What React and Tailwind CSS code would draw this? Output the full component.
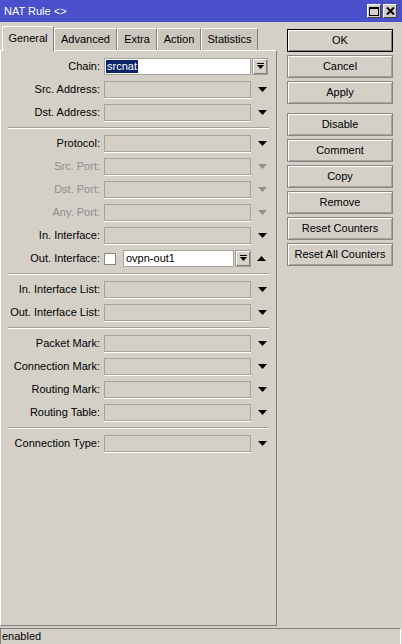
import React from 'react';

const font = "font-['Liberation_Sans',Arial,sans-serif]";

const DropIcon = ({ up = false, disabled = false }) => (
  <svg width="9" height="5" viewBox="0 0 9 5" className="shrink-0">
    {up ? (
      <polygon points="0,5 9,5 4.5,0" fill={disabled ? '#8e8e8e' : '#000'} />
    ) : (
      <polygon points="0,0 9,0 4.5,5" fill={disabled ? '#8e8e8e' : '#000'} />
    )}
  </svg>
);

const ComboButton = () => (
  <div className="flex h-[17px] w-[16px] shrink-0 items-center justify-center border border-[#a09d97] bg-[#d4d0c8] shadow-[inset_1px_1px_0_white,inset_-1px_-1px_0_#808080]">
    <svg width="7" height="7" viewBox="0 0 7 7">
      <rect x="0" y="0" width="7" height="1" fill="#000" />
      <polygon points="0,2 7,2 3.5,6" fill="#000" />
    </svg>
  </div>
);

const Field = ({ label, disabled = false }) => (
  <div className="flex h-[17px] items-center">
    <div className={`w-[100px] pr-[1px] text-right ${disabled ? 'text-[#8e8e8e]' : 'text-black'}`}>{label}</div>
    <div className="ml-[3px] h-[17px] w-[147px] border border-[#a6a39d] bg-[#d4d0c8] shadow-[0_1px_0_white]" />
    <div className="ml-[7px]">
      <DropIcon disabled={disabled} />
    </div>
  </div>
);

const Sep = () => <div className="ml-[7px] h-[2px] w-[261px] border-t border-b border-t-[#a4a19b] border-b-white" />;

const Btn = ({ children, primary = false, className = '' }) => (
  <button
    className={`h-[23px] w-[106px] bg-[#d4d0c8] text-[11px] text-black ${
      primary
        ? 'border border-black shadow-[inset_1px_1px_0_white,inset_-1px_-1px_0_#808080]'
        : 'border border-[#8a8782] shadow-[inset_1px_1px_0_white,inset_-1px_-1px_0_#a5a29c]'
    } ${className}`}
  >
    {children}
  </button>
);

const tabs = ['Advanced', 'Extra', 'Action', 'Statistics'];
const tabWidths = ['w-[63px]', 'w-[40px]', 'w-[44px]', 'w-[57px]'];

export default function App() {
  return (
    <div className={`${font} flex h-[644px] w-[402px] flex-col overflow-hidden bg-[#d4d0c8] text-[11px] text-black`}>
      {/* title bar */}
      <div className="flex h-[22px] shrink-0 items-center bg-[#4a4fcb] pl-[4px] pr-[5px] text-white">
        <span className="flex-1 text-[11px]">NAT Rule &lt;&gt;</span>
        <div className="flex gap-[2px]">
          <div className="flex h-[14px] w-[14px] items-center justify-center border border-[#404040] border-l-white border-t-white bg-[#d4d0c8]">
            <div className="h-[9px] w-[10px] border border-t-2 border-black" />
          </div>
          <div className="flex h-[14px] w-[14px] items-center justify-center border border-[#404040] border-l-white border-t-white bg-[#d4d0c8]">
            <svg width="9" height="8" viewBox="0 0 9 8">
              <path d="M1 0.5 L8 7.5 M8 0.5 L1 7.5" stroke="#000" strokeWidth="2" />
            </svg>
          </div>
        </div>
      </div>

      <div className="flex flex-1">
        {/* left side */}
        <div className="flex w-[277px] flex-col pt-[3px]">
          <div className="flex h-[25px] items-end pl-[2px]">
            <div className="relative top-[1px] z-10 flex h-[25px] w-[52px] items-center justify-center border-l border-t border-r border-l-white border-t-white border-r-[#808080] bg-[#d4d0c8] pb-[2px] text-[11px]">
              General
            </div>
            {tabs.map((t, i) => (
              <div
                key={t}
                className={`flex h-[22px] ${tabWidths[i]} items-center justify-center border-l border-t border-r border-l-white border-t-white border-r-[#808080] bg-[#cbc7bf] text-[11px]`}
              >
                {t}
              </div>
            ))}
          </div>
          <div className="flex flex-1 flex-col gap-[6px] border border-l-white border-t-white border-r-[#808080] border-b-[#808080] pt-[7px]">
            <div className="flex h-[17px] items-center">
              <div className="w-[100px] pr-[1px] text-right">Chain:</div>
              <div className="ml-[3px] flex h-[17px] w-[147px] items-center border border-[#a6a39d] bg-white pl-[1px]">
                <span className="bg-[#0a246a] px-[1px] leading-[13px] text-white">srcnat</span>
              </div>
              <div className="ml-[1px]">
                <ComboButton />
              </div>
            </div>
            <Field label="Src. Address:" />
            <Field label="Dst. Address:" />
            <Sep />
            <Field label="Protocol:" />
            <Field label="Src. Port:" disabled />
            <Field label="Dst. Port:" disabled />
            <Field label="Any. Port:" disabled />
            <Field label="In. Interface:" />
            <div className="flex h-[17px] items-center">
              <div className="w-[100px] pr-[1px] text-right">Out. Interface:</div>
              <div className="ml-[3px] h-[12px] w-[12px] border border-[#8a8782] bg-white" />
              <div className="ml-[7px] flex h-[17px] w-[111px] items-center border border-[#a6a39d] bg-white pl-[2px]">
                ovpn-out1
              </div>
              <div className="ml-[1px]">
                <ComboButton />
              </div>
              <div className="ml-[6px]">
                <DropIcon up />
              </div>
            </div>
            <Sep />
            <Field label="In. Interface List:" />
            <Field label="Out. Interface List:" />
            <Sep />
            <Field label="Packet Mark:" />
            <Field label="Connection Mark:" />
            <Field label="Routing Mark:" />
            <Field label="Routing Table:" />
            <Sep />
            <Field label="Connection Type:" />
          </div>
        </div>

        {/* right side buttons */}
        <div className="ml-[10px] flex flex-col gap-[3px] pt-[7px]">
          <Btn primary>OK</Btn>
          <Btn>Cancel</Btn>
          <Btn>Apply</Btn>
          <Btn className="mt-[6px]">Disable</Btn>
          <Btn>Comment</Btn>
          <Btn>Copy</Btn>
          <Btn>Remove</Btn>
          <Btn>Reset Counters</Btn>
          <Btn>Reset All Counters</Btn>
        </div>
      </div>

      {/* status bar */}
      <div className="mt-[2px] flex h-[16px] shrink-0 items-center border-l border-t border-r border-l-[#808080] border-t-[#808080] border-r-white pl-[1px] mr-[1px]">
        enabled
      </div>
    </div>
  );
}
